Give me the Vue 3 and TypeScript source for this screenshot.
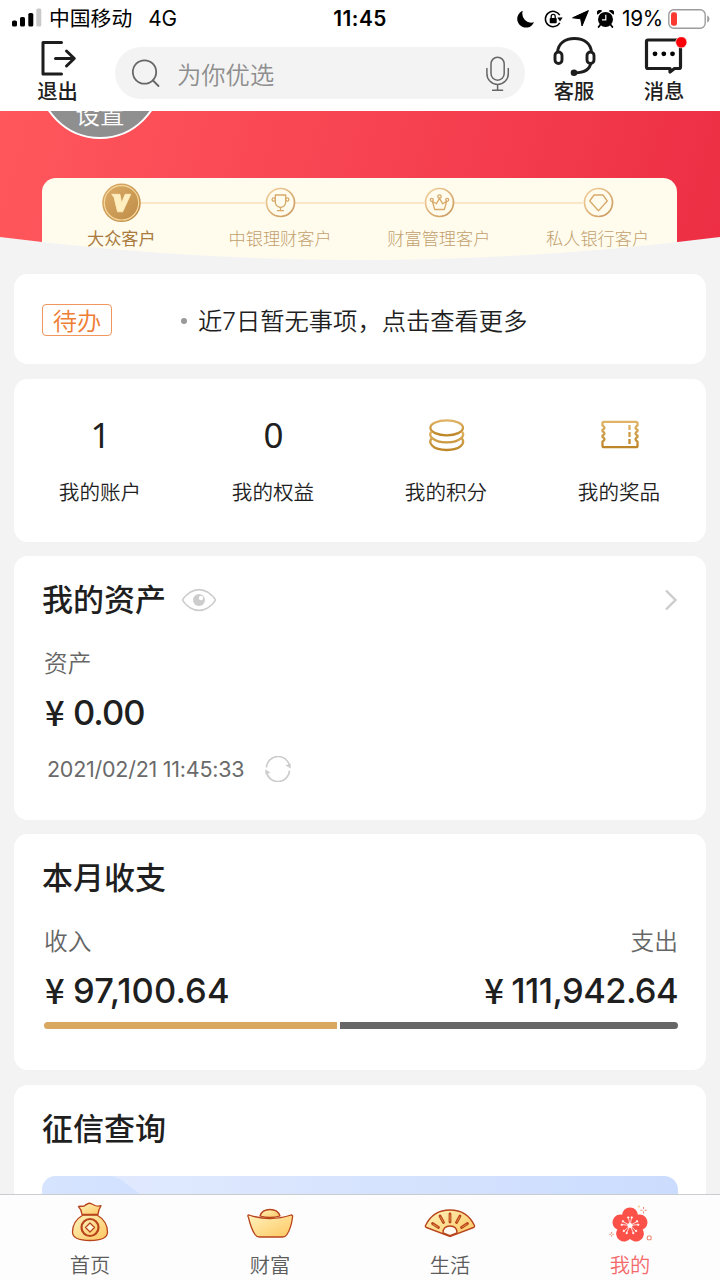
<script setup lang="ts">
interface Tier { label: string; kind: 'v' | 'cup' | 'crown' | 'gem' }
interface Stat { label: string; value?: string; icon?: 'coins' | 'ticket' }
interface Tab { label: string; icon: 'bag' | 'ingot' | 'fan' | 'flower' }

const tiers: Tier[] = [
  { label: '大众客户', kind: 'v' },
  { label: '中银理财客户', kind: 'cup' },
  { label: '财富管理客户', kind: 'crown' },
  { label: '私人银行客户', kind: 'gem' },
]
const stats: Stat[] = [
  { label: '我的账户', value: '1' },
  { label: '我的权益', value: '0' },
  { label: '我的积分', icon: 'coins' },
  { label: '我的奖品', icon: 'ticket' },
]
const tabs: Tab[] = [
  { label: '首页', icon: 'bag' },
  { label: '财富', icon: 'ingot' },
  { label: '生活', icon: 'fan' },
  { label: '我的', icon: 'flower' },
]
const activeTab = '我的'
const petals = [0, 72, 144, 216, 288]
</script>

<template>
  <div class="screen">
    <svg class="defs" width="0" height="0" aria-hidden="true">
      <defs>
        <linearGradient id="gold" x1="0" y1="0" x2="0" y2="1">
          <stop offset="0" stop-color="#e0b466" /><stop offset="1" stop-color="#bd8628" />
        </linearGradient>
        <linearGradient id="ring" x1="0" y1="0" x2="1" y2="1">
          <stop offset="0" stop-color="#f4d3a0" /><stop offset="1" stop-color="#c8965a" />
        </linearGradient>
        <linearGradient id="medal" x1="0" y1="0" x2="1" y2="1">
          <stop offset="0" stop-color="#dcae68" /><stop offset="1" stop-color="#bd8a45" />
        </linearGradient>
        <linearGradient id="honey" x1="0" y1="0" x2="1" y2="1">
          <stop offset="0" stop-color="#fff3bd" /><stop offset="1" stop-color="#fdc660" />
        </linearGradient>
      </defs>
    </svg>

    <header class="top">
      <div class="status">
        <div class="status-left">
          <svg class="signal" width="30" height="20" viewBox="0 0 30 20">
            <rect x="0" y="12.5" width="5" height="6" rx="1.6" />
            <rect x="8" y="9" width="5" height="9.5" rx="1.6" />
            <rect x="16.3" y="5" width="5" height="13.5" rx="1.6" />
            <rect x="24.3" y="0.5" width="5" height="18" rx="1.6" fill="#c9c9c9" />
          </svg>
          <span class="carrier">中国移动</span>
          <span class="net">4G</span>
        </div>
        <span class="clock">11:45</span>
        <div class="status-right">
          <svg width="18" height="18" viewBox="0 0 18 18"><path d="M5.8.8A8.7 8.7 0 1 0 17 12.2 9 9 0 0 1 5.8.8z" /></svg>
          <svg class="lock" width="20" height="18" viewBox="0 0 20 18">
            <path d="M15.8 5.2A7.7 7.7 0 1 0 15.8 12.8" fill="none" stroke="#000" stroke-width="1.5" />
            <path d="M13.3 7.5h5.4l-2.7 4z" />
            <rect x="5.7" y="8" width="7" height="5.3" rx=".8" />
            <path d="M7.2 8V6.4a2 2 0 0 1 4 0V8" fill="none" stroke="#000" stroke-width="1.3" />
          </svg>
          <svg class="arrow" width="17" height="17" viewBox="0 0 17 17"><path d="M16.4.6 10 16 8.7 8.8.6 7.8z" stroke="#000" stroke-width="1" stroke-linejoin="round" /></svg>
          <svg class="alarm" width="17" height="18" viewBox="0 0 17 18">
            <circle cx="8.5" cy="9.4" r="7.5" />
            <path d="M.5 4.8A3 3 0 0 1 5.2 1zM16.5 4.8A3 3 0 0 0 11.8 1z" />
            <path d="M3.5 14.5 1.6 17M13.5 14.5l1.9 2.5" stroke="#000" stroke-width="1.8" stroke-linecap="round" />
            <path d="M8.8 4.8v5H5" fill="none" stroke="#fff" stroke-width="1.2" />
          </svg>
          <span class="percent">19%</span>
          <svg width="42" height="20" viewBox="0 0 42 20">
            <rect x=".8" y=".8" width="36.4" height="18.4" rx="5" fill="#fff" stroke="#9c9c9c" stroke-width="1.4" />
            <rect x="3" y="3.3" width="6" height="13.4" rx="2.3" fill="#fa3a30" />
            <path d="M39.2 6.500c3 1.200 3 5.800 0 7z" fill="#9c9c9c" />
          </svg>
        </div>
      </div>
      <div class="nav">
        <div class="nav-item exit">
          <svg width="36" height="38" viewBox="0 0 36 38" fill="none" stroke="#1d1d1d" stroke-width="3" stroke-linecap="round" stroke-linejoin="round">
            <path d="M20.500 3.500H2v31.500h18.500M14.500 19.500H33M25.500 12 33.300 19.500l-7.800 7.500" />
          </svg>
          <span>退出</span>
        </div>
        <div class="search">
          <svg width="30" height="30" viewBox="0 0 30 30" fill="none" stroke="#666" stroke-width="1.800" stroke-linecap="round">
            <circle cx="12.500" cy="14" r="11.700" /><path d="m21 22.500 5.500 5.500" />
          </svg>
          <span>为你优选</span>
          <svg class="mic" width="24" height="36" viewBox="0 0 24 36" fill="none" stroke="#666" stroke-width="1.500" stroke-linecap="round">
            <rect x="5" y="2.200" width="13.200" height="23" rx="6.600" />
            <path d="M.9 13.500v5.200a10.700 10.700 0 0 0 21.400 0v-5.200M11.600 29.500V35M6.600 35.200h10" />
          </svg>
        </div>
        <div class="nav-item service">
          <svg width="43" height="41" viewBox="0 0 43 41" fill="none" stroke="#1d1d1d" stroke-width="2.900">
            <path d="M4.500 15.500C5 6.500 12 1.500 21.500 1.500S38 6.500 38.500 15.500M38 25.500c-1 6.500-6 10.300-16 10.300" />
            <rect x="2" y="15" width="7" height="11.500" rx="3.500" />
            <rect x="34" y="15" width="7" height="11.500" rx="3.500" />
            <circle cx="21" cy="35.800" r="3.300" fill="#1d1d1d" stroke="none" />
          </svg>
          <span>客服</span>
        </div>
        <div class="nav-item message">
          <svg width="44" height="41" viewBox="0 0 44 41">
            <path d="M4 3h31q1.500 0 1.500 1.500V30q0 1.500-1.500 1.500h-4.500L26 35v-3.500H4q-1.500 0-1.500-1.500V4.500Q2.500 3 4 3z" fill="none" stroke="#1d1d1d" stroke-width="3.200" stroke-linejoin="round" />
            <circle cx="11" cy="16.800" r="2.400" /><circle cx="19.800" cy="16.800" r="2.400" /><circle cx="28.500" cy="16.800" r="2.400" />
            <circle cx="37.300" cy="5.300" r="5.600" fill="#fb0007" stroke="#fff" stroke-width=".6" />
          </svg>
          <span>消息</span>
        </div>
      </div>
    </header>

    <main class="content">
      <section class="hero">
        <div class="avatar"><span>设置</span></div>
        <div class="tiers">
          <div v-for="t in tiers" :key="t.kind" class="tier" :class="{ current: t.kind === 'v' }">
            <div class="tier-icon">
              <svg v-if="t.kind === 'v'" width="40" height="40" viewBox="0 0 40 40">
                <circle cx="20.500" cy="19.800" r="19.300" fill="url(#medal)" />
                <circle cx="20.500" cy="19.800" r="17.200" fill="none" stroke="#f5d79c" stroke-width="1.200" />
                <path d="M10.700 11.300h8.200l1.700 8.700 3.500-8.700h5.600l-8 17.500h-5.200L13 14.200z" fill="#ffeec0" stroke="#ffeec0" stroke-width=".8" stroke-linejoin="round" />
              </svg>
              <svg v-else width="32" height="32" viewBox="0 0 32 32" fill="none" stroke="#d8a969" stroke-width="1.300" stroke-linejoin="round">
                <circle cx="16.500" cy="15.500" r="14" stroke="url(#ring)" stroke-width="1.700" />
                <g v-if="t.kind === 'cup'">
                  <path d="M11.300 8h10.400v7q0 4.500-5.200 5.500-5.200-1-5.200-5.500zM16.500 20.500v3M13 23.700h7" />
                  <circle cx="9.800" cy="12.500" r="1.700" /><circle cx="23.200" cy="12.500" r="1.700" />
                </g>
                <g v-else-if="t.kind === 'crown'">
                  <path d="m9.300 14.300 2.400 8.200h9.600l2.400-8.200-4 2.500-3.200-5.500-3.200 5.500z" />
                  <circle cx="8.800" cy="12.800" r="1.500" /><circle cx="24.200" cy="12.800" r="1.500" /><circle cx="16.500" cy="9.500" r="1.700" />
                </g>
                <path v-else d="M12 8h9l4.300 6-8.800 9.800-8.800-9.800z" />
              </svg>
            </div>
            <span>{{ t.label }}</span>
          </div>
        </div>
        <svg class="curve" width="720" height="40" viewBox="0 0 720 40"><path d="M0 3Q360 49 720 3V40H0z" fill="#f3f3f3" /></svg>
      </section>

      <section class="card notice">
        <span class="tag">待办</span>
        <i class="dot"></i>
        <span class="notice-text">近7日暂无事项，点击查看更多</span>
      </section>

      <section class="card stats">
        <div v-for="s in stats" :key="s.label" class="stat">
          <div class="stat-top">
            <span v-if="s.value">{{ s.value }}</span>
            <svg v-else-if="s.icon === 'coins'" width="38" height="34" viewBox="0 0 38 34" fill="none" stroke="url(#gold)" stroke-width="2.300">
              <ellipse cx="18.700" cy="9.800" rx="16.300" ry="7.500" />
              <path d="M3.500 13.500c-3.500 4 1 10.800 15.200 10.800s18.700-6.800 15.200-10.800M3.500 20.500c-3.500 4.500 1 11.500 15.200 11.500S37.400 25 33.900 20.500" />
            </svg>
            <svg v-else width="40" height="30" viewBox="0 0 40 30" fill="none" stroke="url(#gold)" stroke-width="2.300" stroke-linejoin="round">
              <path d="M4 1.800h32q1.500 0 1.500 1.500V5.500q-4 2.200 0 4.300v1.500q-4 2.200 0 4.300v1.500q-4 2.200 0 4.300v4.300q0 1.500-1.500 1.500H4q-1.500 0-1.500-1.500v-4.300q4-2.100 0-4.300v-1.500q4-2.100 0-4.300V9.800q4-2.100 0-4.300V3.300Q2.500 1.800 4 1.800z" />
              <path d="M29.500 5v5" stroke="#ddb061" /><path d="M29.500 12v5" stroke="#cf9c46" /><path d="M29.500 19v5" stroke="#c18b2f" />
            </svg>
          </div>
          <span class="stat-label">{{ s.label }}</span>
        </div>
      </section>

      <section class="card assets">
        <div class="title-row">
          <h2>我的资产</h2>
          <svg class="eye" width="36" height="24" viewBox="0 0 36 24">
            <path d="M1.500 12Q3.500 8 9 4.300 18-1 27 4.300 32.500 8 34.500 12 32.500 16 27 19.700 18 25 9 19.700 3.500 16 1.500 12z" fill="none" stroke="#ccc" stroke-width="1.600" stroke-linejoin="round" />
            <circle cx="18" cy="12" r="6" fill="#ccc" /><circle cx="20" cy="10" r="2.200" fill="#fff" />
          </svg>
          <svg class="chevron" width="14" height="22" viewBox="0 0 14 22" fill="none" stroke="#ccc" stroke-width="2.400"><path d="m2 1.500 9.500 9.500L2 20.500" /></svg>
        </div>
        <div class="caption">资产</div>
        <div class="amount zero"><b>¥</b><span>0.00</span></div>
        <div class="date-row">
          <span>2021/02/21 11:45:33</span>
          <svg width="26" height="26" viewBox="0 0 26 26">
            <path d="M1.500 11.500a11.600 11.600 0 0 1 23-1.500M24.500 14.500a11.600 11.600 0 0 1-23 1.500" fill="none" stroke="#ccc" stroke-width="1.600" />
            <path d="m20.500 9.500 5.300 3-.3-5zM5.500 16.500l-5.300-3 .3 5z" fill="#ccc" />
          </svg>
        </div>
      </section>

      <section class="card flow">
        <div class="title-row"><h2>本月收支</h2></div>
        <div class="pair caption"><span>收入</span><span>支出</span></div>
        <div class="pair">
          <div class="amount"><b>¥</b><span>97,100.64</span></div>
          <div class="amount spent"><b>¥</b><span>111,942.64</span></div>
        </div>
        <div class="bar"><i class="in"></i><i class="out"></i></div>
      </section>

      <section class="card credit">
        <div class="title-row"><h2>征信查询</h2></div>
        <div class="banner"></div>
      </section>
    </main>

    <nav class="tabbar">
      <div v-for="t in tabs" :key="t.label" class="tab" :class="{ active: t.label === activeTab }">
        <svg v-if="t.icon === 'bag'" width="52" height="42" viewBox="0 0 52 42" fill="url(#honey)" stroke="#b8441c" stroke-width="1.300" stroke-linejoin="round">
          <path d="M19 13C13 16.500 8.500 22.500 8.500 30q0 8.500 17.500 8.500T43.500 30c0-7.500-4.500-13.500-10.500-17z" />
          <path d="M18 12.500q-.5-5-3.500-8l6-.5q1-1.500 3-2 1.500-1.500 4.500 0l3 1.500q3 1 6 .2-2.500 4-3 8.800z" />
          <circle cx="26" cy="25.500" r="8.500" stroke-width="2.200" />
          <path d="m26 21 4.500 4.500L26 30l-4.500-4.500z" fill="#fff8dc" />
        </svg>
        <svg v-else-if="t.icon === 'ingot'" width="52" height="42" viewBox="0 0 52 42" fill="url(#honey)" stroke="#b8441c" stroke-width="1.300" stroke-linejoin="round">
          <path d="M16 14q2-6.500 10-6.500T36 14q-10 3-20 0z" />
          <path d="M5 13q10 3.500 21 3.500T47 13q2 0 1.500 2.500-1.500 11-5.500 17-1.500 2.500-4.500 2.500h-23q-3 0-4.500-2.500-4-6-6.500-17Q3 13 5 13z" />
        </svg>
        <svg v-else-if="t.icon === 'fan'" width="52" height="42" viewBox="0 0 52 42" fill="url(#honey)" stroke="#b8441c" stroke-width="1.400" stroke-linejoin="round">
          <path d="M1.500 23.500Q9 8 26 8t24.500 15.500q.5 1.500-1 2L27 34.200h-2L2.500 25.500q-1.500-.5-1-2z" />
          <path d="m19 31 7 2.700 7-2.700q0-7-7-7t-7 7z" fill="#fffaf0" />
          <path d="M26 12v8M16 14l3.500 6.500M36 14l-3.500 6.500M8.500 21.500l6 4M43.500 21.500l-6 4" stroke-width="2.800" stroke-linecap="round" />
          <path d="M26 12.500v7M16.200 14.500l3.100 5.700M35.800 14.500l-3.100 5.700M9 22l5.200 3.400M43 22l-5.200 3.400" stroke="#f0a548" stroke-width=".7" />
        </svg>
        <svg v-else width="52" height="42" viewBox="0 0 52 42">
          <g fill="#fc5148">
            <circle v-for="a in petals" :key="a" cx="26" cy="13.500" r="8" :transform="`rotate(${a} 26 23.5)`" />
            <circle cx="26" cy="23.500" r="7" />
          </g>
          <g stroke="#fff" stroke-width=".7" fill="#fff">
            <circle cx="26" cy="23.500" r="2.200" />
            <g v-for="a in petals" :key="a" :transform="`rotate(${a} 26 23.5)`">
              <path d="M26 23.500 24.500 16M26 23.500l1.500-7.500" /><circle cx="24.200" cy="15.500" r=".8" /><circle cx="27.800" cy="15.500" r=".8" />
            </g>
          </g>
          <g fill="none" stroke="#ec8a73" stroke-width="1.100">
            <path d="M39.500 5v2M39.500 9.500v2M36.500 8.200h2M40.500 8.200h2M7.500 30v1.500M7.500 33v1.500M5.300 32.200h1.500M8.300 32.200h1.500" />
            <rect x="43.300" y="34" width="3.800" height="3.800" rx="1" />
          </g>
          <circle cx="35" cy="4.500" r=".9" fill="#f7c873" />
        </svg>
        <span>{{ t.label }}</span>
      </div>
    </nav>
  </div>
</template>

<style>
html, body { margin: 0; overflow: hidden; }
</style>

<style scoped>
* { box-sizing: border-box; }
.screen {
  width: 720px; height: 1280px; display: flex; flex-direction: column; overflow: hidden;
  background: #f3f3f3; color: #1f1f1f; font-family: Inter, "Noto Sans CJK SC", sans-serif;
}
.defs { position: absolute; }
svg { display: block; flex: none; }
span, h2 { white-space: nowrap; }
.top { flex: none; height: 111px; background: #fff; }
.status { height: 37px; display: grid; grid-template-columns: 1fr auto 1fr; align-items: center; color: #000; font-size: 20.8px; line-height: 36px; }
.status-left { display: flex; align-items: center; padding-left: 12px; }
.signal { margin-bottom: 1px; }
.carrier { margin-left: 7px; }
.net { margin-left: 16px; letter-spacing: -.2px; }
.clock { font-weight: 600; letter-spacing: .5px; }
.status-right { display: flex; align-items: center; justify-content: flex-end; padding-right: 10px; }
.lock { margin-left: 9px; }
.arrow { margin-left: 8px; }
.alarm { margin-left: 8px; }
.percent { margin: 0 5px 0 8px; letter-spacing: -.3px; }
.nav { height: 74px; display: flex; align-items: flex-start; }
.nav-item { height: 68px; display: flex; flex-direction: column; align-items: center; font-size: 20.3px; font-weight: 500; line-height: 26px; }
.nav-item span { margin-top: auto; }
.exit { width: 115px; padding-top: 2px; }
.exit svg { margin-left: 2px; }
.search { width: 410px; height: 52px; margin-top: 10px; border-radius: 26px; background: #f3f3f3; display: flex; align-items: center; padding: 0 15px 0 17px; color: #8e8e8e; font-size: 24.3px; font-weight: 350; }
.search span { margin-left: 15px; }
.mic { margin-left: auto; }
.service { width: 98px; }
.message { width: 82px; }
.message svg { margin-left: 4px; }

.content { flex: 1; min-height: 0; overflow: hidden; display: flex; flex-direction: column; }
.hero {
  flex: none; position: relative; height: 163px; padding: 67px 43px 0 42px; overflow: hidden;
  background: linear-gradient(105deg, #ff575c 0%, #f84553 45%, #ed2e44 100%);
}
.curve { position: absolute; left: 0; bottom: 0; }
.avatar {
  position: absolute; left: 38px; top: -96px; width: 124px; height: 124px; border-radius: 50%;
  border: 2px solid #fff; background: #8f8f8f; color: #fff; font-size: 24.5px; font-weight: 350;
  display: flex; justify-content: center; align-items: flex-end; padding-bottom: 5px; line-height: 34px;
}
.tiers { height: 96px; border-radius: 14px 14px 0 0; background: #fffcee; display: grid; grid-template-columns: repeat(4, 1fr); }
.tier { position: relative; display: flex; flex-direction: column; align-items: center; font-size: 17.2px; font-weight: 300; color: #c2a06d; line-height: 24px; }
.tier-icon { position: relative; height: 49px; display: flex; align-items: center; }
.tier:not(:last-child)::before { content: ""; position: absolute; left: calc(50% + 15px); top: 24px; width: calc(100% - 30px); height: 1.5px; background: #fbe6c8; }
.current { font-weight: 400; color: #a97b3e; }

.card { flex: none; margin: 0 14px 14px; border-radius: 14px; background: #fff; }
.notice { height: 90px; margin-bottom: 15px; display: flex; align-items: center; padding-left: 28px; padding-top: 1px; }
.tag { width: 70px; height: 32px; border: 1.5px solid #f1965c; border-radius: 4px; color: #ee7d35; font-size: 24.3px; font-weight: 350; line-height: 32px; text-align: center; }
.dot { width: 6px; height: 6px; border-radius: 50%; background: #999; margin: 3px 11px 0 69px; }
.notice-text { font-size: 24.3px; font-weight: 350; line-height: 34px; padding-top: 2px; }
.stats { height: 163px; display: grid; grid-template-columns: repeat(4, 1fr); }
.stat { display: flex; flex-direction: column; align-items: center; padding-top: 38px; }
.stat-top { height: 36px; display: flex; align-items: center; font-family: "Noto Sans", sans-serif; font-size: 35px; line-height: 35px; }
.stat-top span { margin-bottom: 2px; }
.stat-label { margin: 25px 1px 0 0; font-size: 20.6px; font-weight: 350; line-height: 30px; }
.title-row { display: flex; align-items: center; height: 40px; }
h2 { margin: 0; font-size: 31px; font-weight: 500; line-height: 40px; }
.assets { height: 264px; padding: 24px 28px 0; }
.eye { margin-left: 15px; }
.chevron { margin-left: auto; }
.caption { margin-top: 28px; padding-left: 2px; font-size: 23.7px; line-height: 32px; height: 32px; color: #666; font-weight: 350; }
.amount { display: flex; align-items: center; margin-top: 13px; height: 40px; padding-left: 3px; font-size: 34.5px; font-weight: 500; line-height: 40px; }
.amount b { width: 20px; margin: 0 8px 4px 0; font-weight: 500; font-family: "Noto Sans CJK SC", sans-serif; }
.amount span { letter-spacing: .1px; }
.zero span { letter-spacing: -1px; }
.spent span { letter-spacing: -.6px; }
.spent b { margin-right: 7px; }
.date-row { display: flex; align-items: center; height: 30px; margin-top: 21px; padding-left: 5px; font-size: 21.5px; line-height: 30px; color: #6a6a6a; letter-spacing: -.25px; }
.date-row svg { margin-left: 21px; }
.flow { height: 236px; margin-bottom: 15px; padding: 24px 28px 0; }
.pair { display: flex; justify-content: space-between; }
.bar { display: flex; gap: 3px; height: 7px; margin: 11px 0 0 2px; }
.in { width: 293px; background: #d9a962; border-radius: 4px 0 0 4px; }
.out { flex: 1; background: #666; border-radius: 0 4px 4px 0; }
.credit { height: 200px; padding: 24px 28px 0; }
.banner {
  height: 80px; margin-top: 27px; border-radius: 14px; position: relative; overflow: hidden;
  background: linear-gradient(90deg, #e3ebfe, #cbdcfe);
}
.banner::before { content: ""; position: absolute; left: 0; top: 0; width: 130px; height: 50px; background: linear-gradient(90deg, #d6e4ff, #cfe0ff); clip-path: polygon(0 0, 70px 0, 78px 3px, 98px 18px, 130px 50px, 0 50px); }

.tabbar { flex: none; height: 86px; border-top: 1px solid #c9ccd1; background: #fdfdfd; display: grid; grid-template-columns: repeat(4, 1fr); }
.tab { display: flex; flex-direction: column; align-items: center; padding-top: 7px; color: #5c5c5c; font-size: 20.3px; font-weight: 350; line-height: 28px; }
.tab span { margin-top: 8px; }
.active { color: #f4696b; }
</style>
